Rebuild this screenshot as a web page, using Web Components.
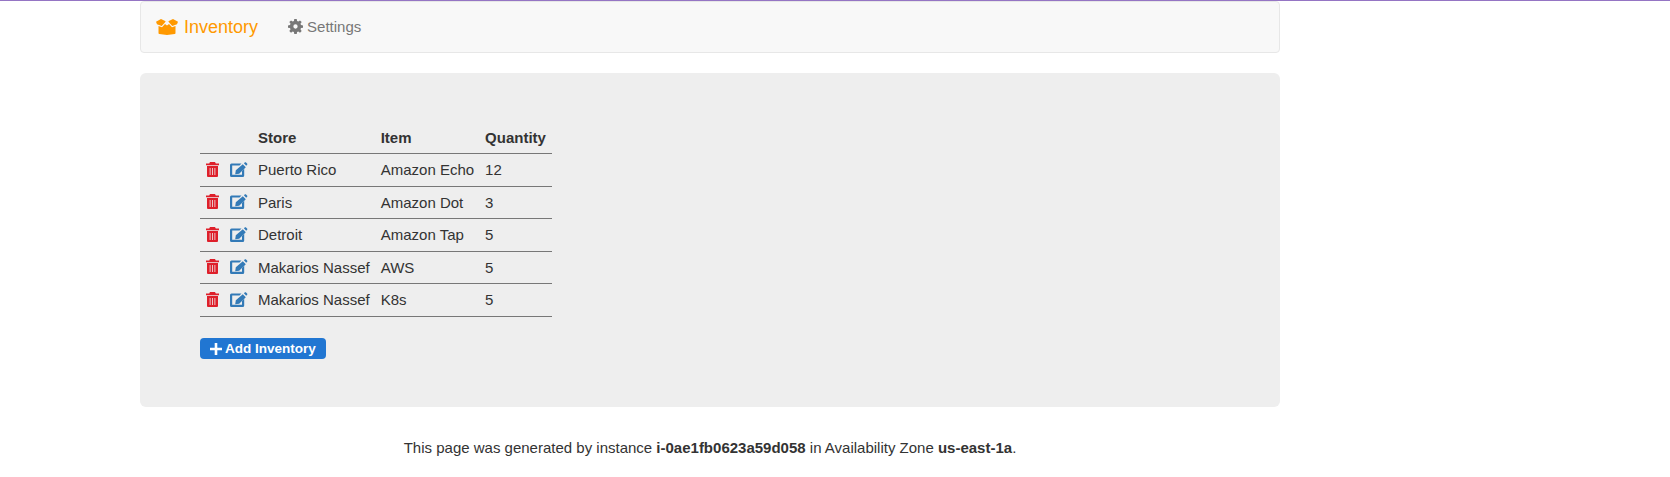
<!DOCTYPE html>
<html>
<head>
<meta charset="utf-8">
<title>Inventory</title>
<style>
  html, body { margin: 0; padding: 0; background: #fff; }
  body { font-family: "Liberation Sans", Arial, sans-serif; color: #333; border-top: 1px solid #9575c4; }
</style>
</head>
<body>
<app-shell>
  <app-nav></app-nav>
  <inventory-panel>
    <inventory-table></inventory-table>
    <add-button>Add Inventory</add-button>
  </inventory-panel>
  <app-footer></app-footer>
</app-shell>

<script>
const icons = {
  trash: `<svg viewBox="0 0 13 15" width="13" height="15"><path fill="currentColor" fill-rule="evenodd" d="M4 0h5l.8 1.500H13V3.200H0V1.500h3.200zM1 4h11v10a1 1 0 0 1-1 1H2a1 1 0 0 1-1-1zm2.700 2v7h.8V6zm2.400 0v7h.8V6zm2.400 0v7h.8V6z"/></svg>`,
  edit: `<svg viewBox="0 0 17.500 15" width="17.500" height="15"><path fill="currentColor" fill-rule="evenodd" d="M1.500 1.500H11.500L9.500 3.500H2.200V12.800H12V9L14.200 6.800V13.500A1.500 1.500 0 0 1 12.700 15H1.500A1.500 1.500 0 0 1 0 13.500V3A1.500 1.500 0 0 1 1.500 1.500z"/><path fill="currentColor" d="M12.800 2.300L15.800 5.300L9.200 11.800L5.200 12.300L5.800 8.300zM13.900 1.300L15 .3q.4-.3.800 0l1.500 1.500q.3.400 0 .8L16.200 3.700z"/></svg>`,
  gear: `<svg viewBox="0 0 16 16" width="15" height="15"><path fill="currentColor" fill-rule="evenodd" d="M6.700 0h2.600l.4 2.200 1.300.5L12.800 1.500l1.800 1.800-1.300 1.800.6 1.300 2.100.4v2.500l-2.100.4-.6 1.300 1.300 1.800-1.800 1.800-1.800-1.300-1.300.6-.4 2.100H6.700l-.4-2.100-1.300-.6-1.800 1.300-1.800-1.800 1.300-1.800-.6-1.300L0 9.300V6.800l2.100-.4.6-1.300-1.300-1.800 1.800-1.800L5 2.700l1.300-.5zM8 5.700a2.300 2.300 0 1 0 0 4.600 2.300 2.300 0 0 0 0-4.600z"/></svg>`,
  box: `<svg viewBox="0 0 22 16" width="22" height="16"><path fill="currentColor" d="M2.500 7l3.500 1.300 3-3.300 2 1.600 2-1.600 3 3.300L19.500 7v7a1 1 0 0 1-.8 1L11 16l-7.700-1a1 1 0 0 1-.8-1z"/><path fill="currentColor" d="M0 2.800L5 0l4.700 2.200-1 1.600L5.700 7 1 5.300zM22 2.800L17 0l-4.700 2.200 1 1.600L16.300 7 21 5.300z"/></svg>`,
  plus: `<svg viewBox="0 0 12 12" width="12" height="12"><path fill="currentColor" d="M4.700 0h2.600v4.700H12v2.600H7.300V12H4.700V7.300H0V4.700h4.700z"/></svg>`
};

class AppShell extends HTMLElement {
  constructor() {
    super();
    this.attachShadow({ mode: 'open' }).innerHTML = `
      <style>
        :host { display: block; width: 1140px; margin-left: 140px; }
      </style>
      <slot></slot>`;
  }
}

class AppNav extends HTMLElement {
  constructor() {
    super();
    this.attachShadow({ mode: 'open' }).innerHTML = `
      <style>
        :host {
          display: flex; align-items: center; box-sizing: border-box; height: 52px;
          padding-left: 15px; background: #f8f8f8; border: 1px solid #e7e7e7; border-radius: 4px;
          margin-bottom: 20px;
        }
        .brand { display: flex; align-items: center; gap: 6px; color: #f90; font-size: 18px; }
        .brand svg { display: block; }
        .link { display: flex; align-items: center; gap: 4px; margin-left: 30px; color: #777; font-size: 15px; padding-bottom: 2px; }
        .link svg { display: block; }
      </style>
      <span class="brand">${icons.box}Inventory</span>
      <span class="link">${icons.gear}Settings</span>`;
  }
}

class InventoryPanel extends HTMLElement {
  constructor() {
    super();
    this.attachShadow({ mode: 'open' }).innerHTML = `
      <style>
        :host {
          display: block; box-sizing: border-box; height: 334px; padding: 48px 60px 0;
          background: #eee; border-radius: 6px;
        }
        ::slotted(add-button) { margin-top: 21.500px; }
      </style>
      <slot></slot>`;
  }
}

class InventoryTable extends HTMLElement {
  constructor() {
    super();
    const rows = [
      ['Puerto Rico', 'Amazon Echo', '12'],
      ['Paris', 'Amazon Dot', '3'],
      ['Detroit', 'Amazon Tap', '5'],
      ['Makarios Nassef', 'AWS', '5'],
      ['Makarios Nassef', 'K8s', '5']
    ];
    const body = rows.map(r => `
      <tr>
        <td class="act"><span class="del">${icons.trash}</span><span class="ed">${icons.edit}</span></td>
        <td>${r[0]}</td><td>${r[1]}</td><td>${r[2]}</td>
      </tr>`).join('');
    this.attachShadow({ mode: 'open' }).innerHTML = `
      <style>
        :host { display: block; font-size: 15px; }
        table { border-collapse: collapse; }
        th { text-align: left; font-weight: 700; padding: 8px 11px 7.300px 0; border-bottom: 1px solid #777; line-height: 17px; }
        td { padding: 5px 11px 5px 0; border-bottom: 1px solid #777; line-height: 21.500px; }
        th:first-child, td.act { padding: 0 0 4px 6px; width: 58px; box-sizing: border-box; }
        th:last-child, td:last-child { padding-right: 6px; }
        .act { white-space: nowrap; }
        .act span { display: inline-block; vertical-align: middle; }
        .del { color: #de1f2a; width: 24px; }
        .ed { color: #337ab7; }
        svg { display: block; }
      </style>
      <table>
        <thead><tr><th></th><th>Store</th><th>Item</th><th>Quantity</th></tr></thead>
        <tbody>${body}</tbody>
      </table>`;
  }
}

class AddButton extends HTMLElement {
  constructor() {
    super();
    this.attachShadow({ mode: 'open' }).innerHTML = `
      <style>
        :host {
          display: inline-flex; align-items: center; gap: 3px; box-sizing: border-box; height: 21px;
          padding: 0 10px; background: #2176d2; color: #fff; border-radius: 4px;
          font-size: 13.500px; font-weight: 700;
        }
        svg { display: block; }
      </style>
      ${icons.plus}<slot></slot>`;
  }
}

class AppFooter extends HTMLElement {
  constructor() {
    super();
    this.attachShadow({ mode: 'open' }).innerHTML = `
      <style>
        :host { display: block; margin-top: 32px; text-align: center; font-size: 15px; color: #333; }
      </style>
      This page was generated by instance <b>i-0ae1fb0623a59d058</b> in Availability Zone <b>us-east-1a</b>.`;
  }
}

customElements.define('app-shell', AppShell);
customElements.define('app-nav', AppNav);
customElements.define('inventory-panel', InventoryPanel);
customElements.define('inventory-table', InventoryTable);
customElements.define('add-button', AddButton);
customElements.define('app-footer', AppFooter);
</script>
</body>
</html>
